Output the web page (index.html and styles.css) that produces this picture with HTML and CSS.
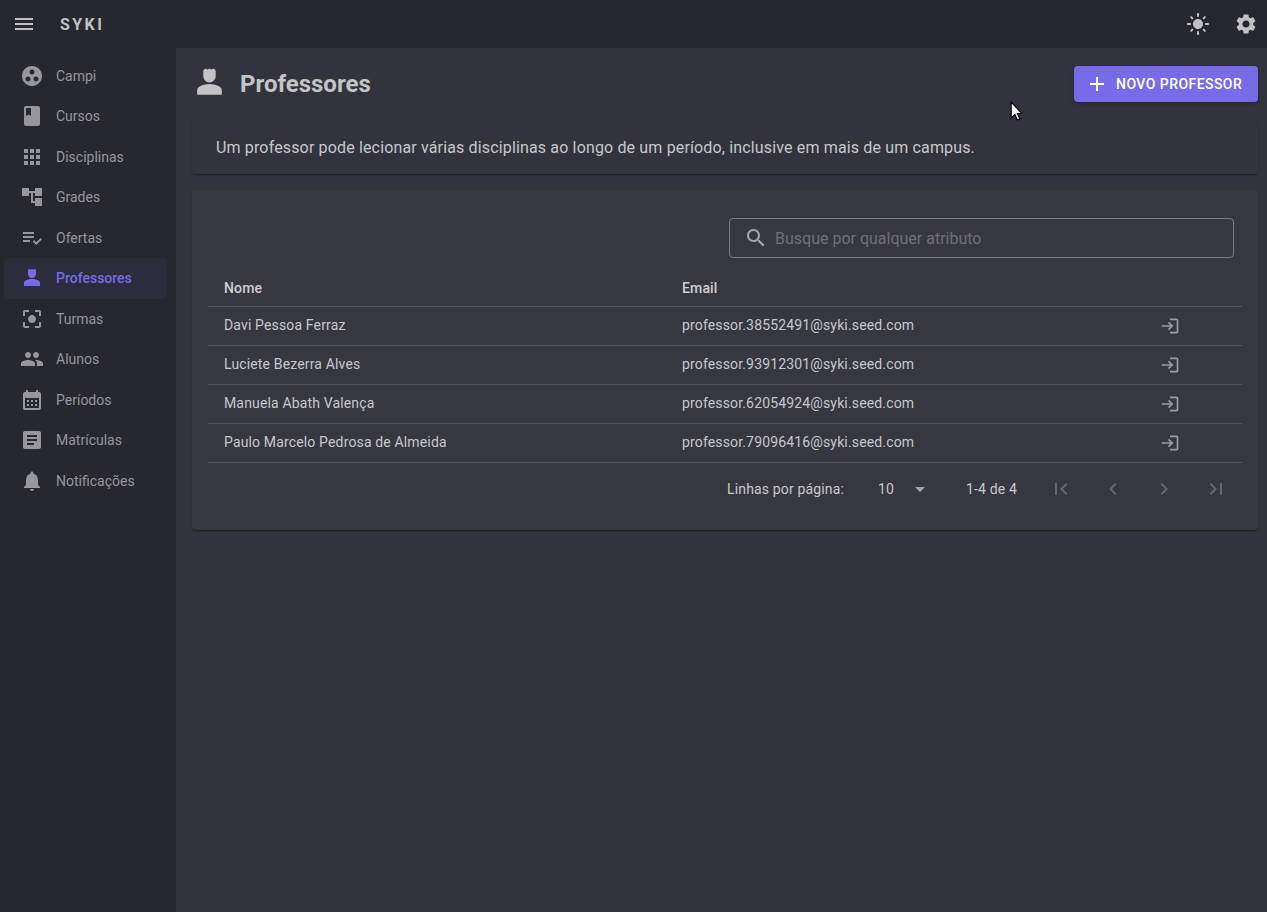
FILE: index.html
```html
<!DOCTYPE html>
<html lang="pt-BR">
<head>
    <meta charset="utf-8">
    <title>Syki - Professores</title>
    <link rel="stylesheet" href="styles.css">
</head>
<body>
    <header class="appbar">
        <svg class="icon menu-icon" viewBox="0 0 24 24"><path d="M3 18h18v-2H3v2zm0-5h18v-2H3v2zm0-7v2h18V6H3z"/></svg>
        <span class="logo">SYKI</span>
        <svg class="icon bar-icon sun-icon" viewBox="0 0 24 24"><path d="M12 7c-2.76 0-5 2.24-5 5s2.24 5 5 5 5-2.24 5-5-2.24-5-5-5zM2 13h2c.55 0 1-.45 1-1s-.45-1-1-1H2c-.55 0-1 .45-1 1s.45 1 1 1zm18 0h2c.55 0 1-.45 1-1s-.45-1-1-1h-2c-.55 0-1 .45-1 1s.45 1 1 1zM11 2v2c0 .55.45 1 1 1s1-.45 1-1V2c0-.55-.45-1-1-1s-1 .45-1 1zm0 18v2c0 .55.45 1 1 1s1-.45 1-1v-2c0-.55-.45-1-1-1s-1 .45-1 1zM5.99 4.58c-.39-.39-1.03-.39-1.41 0-.39.39-.39 1.03 0 1.41l1.06 1.06c.39.39 1.03.39 1.41 0s.39-1.03 0-1.41L5.99 4.58zm12.37 12.37c-.39-.39-1.03-.39-1.41 0-.39.39-.39 1.03 0 1.41l1.06 1.06c.39.39 1.03.39 1.41 0 .39-.39.39-1.03 0-1.41l-1.06-1.06zm1.06-10.96c.39-.39.39-1.03 0-1.41-.39-.39-1.03-.39-1.41 0l-1.06 1.06c-.39.39-.39 1.03 0 1.41s1.03.39 1.41 0l1.06-1.06zM7.05 18.36c.39-.39.39-1.03 0-1.41-.39-.39-1.03-.39-1.41 0l-1.06 1.06c-.39.39-.39 1.03 0 1.41s1.03.39 1.41 0l1.06-1.06z"/></svg>
        <svg class="icon bar-icon" viewBox="0 0 24 24"><path d="M19.14 12.94c.04-.3.06-.61.06-.94 0-.32-.02-.64-.07-.94l2.03-1.58c.18-.14.23-.41.12-.61l-1.92-3.32c-.12-.22-.37-.29-.59-.22l-2.39.96c-.5-.38-1.03-.7-1.62-.94l-.36-2.54c-.04-.24-.24-.41-.48-.41h-3.84c-.24 0-.43.17-.47.41l-.36 2.54c-.59.24-1.13.57-1.62.94l-2.39-.96c-.22-.08-.47 0-.59.22L2.74 8.87c-.12.21-.08.47.12.61l2.03 1.58c-.05.3-.09.63-.09.94s.02.64.07.94l-2.03 1.58c-.18.14-.23.41-.12.61l1.92 3.32c.12.22.37.29.59.22l2.39-.96c.5.38 1.03.7 1.62.94l.36 2.54c.05.24.24.41.48.41h3.84c.24 0 .44-.17.47-.41l.36-2.54c.59-.24 1.13-.56 1.62-.94l2.39.96c.22.08.47 0 .59-.22l1.92-3.32c.12-.22.07-.47-.12-.61l-2.01-1.58zM12 15.6c-1.98 0-3.6-1.62-3.6-3.6s1.62-3.6 3.6-3.6 3.6 1.62 3.6 3.6-1.62 3.6-3.6 3.6z"/></svg>
    </header>

    <div class="layout">
        <nav class="sidebar">
            <a class="nav-item"><svg class="icon" viewBox="0 0 24 24"><path d="M12 2C6.48 2 2 6.48 2 12s4.48 10 10 10 10-4.48 10-10S17.52 2 12 2zM8 17.5c-1.38 0-2.5-1.12-2.5-2.5s1.12-2.5 2.5-2.5 2.5 1.12 2.5 2.5-1.12 2.5-2.5 2.5zM9.5 8c0-1.38 1.12-2.5 2.5-2.5s2.5 1.12 2.5 2.5-1.12 2.5-2.5 2.5S9.5 9.38 9.5 8zm6.5 9.5c-1.38 0-2.5-1.12-2.5-2.5s1.12-2.5 2.5-2.5 2.5 1.12 2.5 2.5-1.12 2.5-2.5 2.5z"/></svg>Campi</a>
            <a class="nav-item"><svg class="icon" viewBox="0 0 24 24"><path d="M18 2H6c-1.1 0-2 .9-2 2v16c0 1.1.9 2 2 2h12c1.1 0 2-.9 2-2V4c0-1.1-.9-2-2-2zM6 4h5v8l-2.5-1.5L6 12V4z"/></svg>Cursos</a>
            <a class="nav-item"><svg class="icon" viewBox="0 0 24 24"><path d="M4 8h4V4H4v4zm6 12h4v-4h-4v4zm-6 0h4v-4H4v4zm0-6h4v-4H4v4zm6 0h4v-4h-4v4zm6-10v4h4V4h-4zm-6 4h4V4h-4v4zm6 6h4v-4h-4v4zm0 6h4v-4h-4v4z"/></svg>Disciplinas</a>
            <a class="nav-item"><svg class="icon" viewBox="0 0 24 24"><path d="M22 11V3h-7v3H9V3H2v8h7V8h2v10h4v3h7v-8h-7v3h-2V8h2v3z"/></svg>Grades</a>
            <a class="nav-item"><svg class="icon" viewBox="0 0 24 24"><path d="M3 10h11v2H3zm0-4h11v2H3zm0 8h7v2H3zm17.59-2.07-4.25 4.24-2.12-2.12-1.41 1.41L16.34 19 22 13.34z"/></svg>Ofertas</a>
            <a class="nav-item active"><svg class="icon" viewBox="0 0 24 24"><path d="M18.39 14.56C16.71 13.7 14.53 13 12 13s-4.71.7-6.39 1.56C4.61 15.07 4 16.1 4 17.22V20h16v-2.78c0-1.12-.61-2.15-1.61-2.66zM12 12c2.21 0 4-1.79 4-4V4.5C16 3.67 15.33 3 14.5 3c-.52 0-.98.27-1.25.67-.27-.4-.73-.67-1.25-.67s-.98.27-1.25.67C10.48 3.27 10.02 3 9.5 3 8.67 3 8 3.67 8 4.5V8c0 2.21 1.79 4 4 4z"/></svg>Professores</a>
            <a class="nav-item"><svg class="icon" viewBox="0 0 24 24"><path d="M12 8c-2.21 0-4 1.79-4 4s1.79 4 4 4 4-1.79 4-4-1.79-4-4-4zm-7 7H3v4c0 1.1.9 2 2 2h4v-2H5v-4zM5 5h4V3H5c-1.1 0-2 .9-2 2v4h2V5zm14-2h-4v2h4v4h2V5c0-1.1-.9-2-2-2zm0 16h-4v2h4c1.1 0 2-.9 2-2v-4h-2v4z"/></svg>Turmas</a>
            <a class="nav-item"><svg class="icon" viewBox="0 0 24 24"><path d="M16 11c1.66 0 2.99-1.34 2.99-3S17.66 5 16 5c-1.66 0-3 1.34-3 3s1.34 3 3 3zm-8 0c1.66 0 2.99-1.34 2.99-3S9.66 5 8 5C6.34 5 5 6.34 5 8s1.34 3 3 3zm0 2c-2.33 0-7 1.17-7 3.5V19h14v-2.5c0-2.33-4.67-3.5-7-3.5zm8 0c-.29 0-.62.02-.97.05 1.16.84 1.97 1.97 1.97 3.45V19h6v-2.5c0-2.33-4.67-3.5-7-3.5z"/></svg>Alunos</a>
            <a class="nav-item"><svg class="icon" viewBox="0 0 24 24"><path d="M19 4h-1V2h-2v2H8V2H6v2H5c-1.11 0-1.99.9-1.99 2L3 20c0 1.1.89 2 2 2h14c1.1 0 2-.9 2-2V6c0-1.1-.9-2-2-2zm0 16H5V10h14v10zM9 14H7v-2h2v2zm4 0h-2v-2h2v2zm4 0h-2v-2h2v2zm-8 4H7v-2h2v2zm4 0h-2v-2h2v2zm4 0h-2v-2h2v2z"/></svg>Períodos</a>
            <a class="nav-item"><svg class="icon" viewBox="0 0 24 24"><path d="M19 3H5c-1.1 0-2 .9-2 2v14c0 1.1.9 2 2 2h14c1.1 0 2-.9 2-2V5c0-1.1-.9-2-2-2zm-5 14H7v-2h7v2zm3-4H7v-2h10v2zm0-4H7V7h10v2z"/></svg>Matrículas</a>
            <a class="nav-item"><svg class="icon" viewBox="0 0 24 24"><path d="M12 22c1.1 0 2-.9 2-2h-4c0 1.1.9 2 2 2zm6-6v-5c0-3.07-1.63-5.64-4.5-6.32V4c0-.83-.67-1.5-1.5-1.5s-1.5.67-1.5 1.5v.68C7.64 5.36 6 7.92 6 11v5l-2 2v1h16v-1l-2-2z"/></svg>Notificações</a>
        </nav>

        <main class="content">
            <div class="page-header">
                <svg class="icon title-icon" viewBox="0 0 24 24"><path d="M18.39 14.56C16.71 13.7 14.53 13 12 13s-4.71.7-6.39 1.56C4.61 15.07 4 16.1 4 17.22V20h16v-2.78c0-1.12-.61-2.15-1.61-2.66zM12 12c2.21 0 4-1.79 4-4V4.5C16 3.67 15.33 3 14.5 3c-.52 0-.98.27-1.25.67-.27-.4-.73-.67-1.25-.67s-.98.27-1.25.67C10.48 3.27 10.02 3 9.5 3 8.67 3 8 3.67 8 4.5V8c0 2.21 1.79 4 4 4z"/></svg>
                <h1>Professores</h1>
                <button class="btn-primary" type="button">
                    <svg class="icon" viewBox="0 0 24 24"><path d="M19 13h-6v6h-2v-6H5v-2h6V5h2v6h6v2z"/></svg>
                    Novo Professor
                </button>
            </div>

            <div class="card info-card">Um professor pode lecionar várias disciplinas ao longo de um período, inclusive em mais de um campus.</div>

            <div class="card table-card">
                <div class="search-row">
                    <div class="search-box">
                        <svg class="icon" viewBox="0 0 24 24"><path d="M15.5 14h-.79l-.28-.27C15.41 12.59 16 11.11 16 9.5 16 5.91 13.09 3 9.5 3S3 5.91 3 9.5 5.91 16 9.5 16c1.61 0 3.09-.59 4.23-1.57l.27.28v.79l5 4.99L20.49 19l-4.99-5zm-6 0C7.01 14 5 11.99 5 9.5S7.01 5 9.5 5 14 7.01 14 9.5 11.99 14 9.5 14z"/></svg>
                        <span>Busque por qualquer atributo</span>
                    </div>
                </div>

                <table class="data-table">
                    <thead>
                        <tr>
                            <th class="col-name">Nome</th>
                            <th class="col-email">Email</th>
                            <th></th>
                        </tr>
                    </thead>
                    <tbody>
                        <tr>
                            <td>Davi Pessoa Ferraz</td>
                            <td>professor.38552491@syki.seed.com</td>
                            <td class="col-action"><svg class="icon" viewBox="0 0 24 24"><path d="M11 7L9.6 8.4l2.6 2.6H2v2h10.2l-2.6 2.6L11 17l5-5-5-5zm9 12h-8v2h8c1.1 0 2-.9 2-2V5c0-1.1-.9-2-2-2h-8v2h8v14z"/></svg></td>
                        </tr>
                        <tr>
                            <td>Luciete Bezerra Alves</td>
                            <td>professor.93912301@syki.seed.com</td>
                            <td class="col-action"><svg class="icon" viewBox="0 0 24 24"><path d="M11 7L9.6 8.4l2.6 2.6H2v2h10.2l-2.6 2.6L11 17l5-5-5-5zm9 12h-8v2h8c1.1 0 2-.9 2-2V5c0-1.1-.9-2-2-2h-8v2h8v14z"/></svg></td>
                        </tr>
                        <tr>
                            <td>Manuela Abath Valença</td>
                            <td>professor.62054924@syki.seed.com</td>
                            <td class="col-action"><svg class="icon" viewBox="0 0 24 24"><path d="M11 7L9.6 8.4l2.6 2.6H2v2h10.2l-2.6 2.6L11 17l5-5-5-5zm9 12h-8v2h8c1.1 0 2-.9 2-2V5c0-1.1-.9-2-2-2h-8v2h8v14z"/></svg></td>
                        </tr>
                        <tr>
                            <td>Paulo Marcelo Pedrosa de Almeida</td>
                            <td>professor.79096416@syki.seed.com</td>
                            <td class="col-action"><svg class="icon" viewBox="0 0 24 24"><path d="M11 7L9.6 8.4l2.6 2.6H2v2h10.2l-2.6 2.6L11 17l5-5-5-5zm9 12h-8v2h8c1.1 0 2-.9 2-2V5c0-1.1-.9-2-2-2h-8v2h8v14z"/></svg></td>
                        </tr>
                    </tbody>
                </table>

                <div class="pagination">
                    <span>Linhas por página:</span>
                    <span class="page-size">10</span>
                    <svg class="icon caret" viewBox="0 0 24 24"><path d="M7 10l5 5 5-5z"/></svg>
                    <span class="page-range">1-4 de 4</span>
                    <svg class="icon page-btn" viewBox="0 0 24 24"><path d="M18.41 16.59L13.82 12l4.59-4.59L17 6l-6 6 6 6zM6 6h2v12H6z"/></svg>
                    <svg class="icon page-btn" viewBox="0 0 24 24"><path d="M15.41 16.59L10.83 12l4.58-4.59L14 6l-6 6 6 6 1.41-1.41z"/></svg>
                    <svg class="icon page-btn" viewBox="0 0 24 24"><path d="M8.59 16.59L13.17 12 8.59 7.41 10 6l6 6-6 6-1.41-1.41z"/></svg>
                    <svg class="icon page-btn" viewBox="0 0 24 24"><path d="M5.59 7.41L10.18 12l-4.59 4.59L7 18l6-6-6-6zM16 6h2v12h-2z"/></svg>
                </div>
            </div>
        </main>
    </div>

    <svg class="cursor" width="13" height="20" viewBox="0 0 12 19"><path d="M1 1v15l3.5-3.3 2.4 5.3 2.2-1-2.4-5.1H11z" fill="#fff" stroke="#000" stroke-width="1"/></svg>
</body>
</html>
```

FILE: styles.css
```css
* {
    box-sizing: border-box;
}
body {
    margin: 0;
    height: 912px;
    overflow: hidden;
    font-family: Roboto, "Liberation Sans", sans-serif;
    font-size: 14px;
    background-color: #32333d;
    color: #c8c8cb;
}
.icon {
    width: 24px;
    height: 24px;
    flex-shrink: 0;
    fill: currentColor;
    display: block;
}

/* barra superior */
.appbar {
    height: 48px;
    background-color: #27272f;
    color: #c2c2c4;
    display: flex;
    align-items: center;
    padding: 0 9px 0 12px;
}
.logo {
    margin-left: 24px;
    font-size: 16px;
    font-weight: 700;
    letter-spacing: 2.4px;
}
.bar-icon {
    margin-left: 24px;
}
.sun-icon {
    margin-left: auto;
}

/* menu lateral */
.layout {
    display: flex;
    height: 864px;
}
.sidebar {
    width: 176px;
    flex-shrink: 0;
    background-color: #27272f;
    padding-top: 7.72px;
}
.nav-item {
    display: flex;
    align-items: center;
    gap: 12px;
    height: 40.5px;
    width: 163px;
    margin-left: 4px;
    padding-left: 16px;
    border-radius: 4px;
    color: #96969b;
}
.nav-item.active {
    background-color: #2d2c3c;
    color: #776be7;
    font-weight: 500;
}

/* conteudo */
.content {
    flex: 1;
    padding: 18px 9px 0 16px;
}
.page-header {
    display: flex;
    align-items: center;
    height: 36px;
    margin-bottom: 18px;
    color: #c4c4c6;
}
.title-icon {
    width: 37px;
    height: 37px;
    margin: -4px 0 0 -1px;
}
h1 {
    margin: 0 0 0 12px;
    font-size: 24px;
    font-weight: 700;
}
.btn-primary {
    margin-left: auto;
    width: 184px;
    height: 36px;
    display: flex;
    align-items: center;
    gap: 7px;
    padding: 0 0 0 11px;
    background-color: #776be7;
    color: #fff;
    border: none;
    border-radius: 4px;
    font-family: inherit;
    font-size: 14px;
    font-weight: 500;
    letter-spacing: 0.45px;
    text-transform: uppercase;
    box-shadow: 0 2px 4px rgba(0, 0, 0, 0.25);
}
.card {
    background-color: #373740;
    border-radius: 4px;
    box-shadow: 0 2px 1px -1px rgba(0, 0, 0, 0.2), 0 1px 1px rgba(0, 0, 0, 0.14), 0 1px 3px rgba(0, 0, 0, 0.12);
}
.info-card {
    height: 54px;
    margin-bottom: 16px;
    padding: 0 24px;
    display: flex;
    align-items: center;
    font-size: 16px;
    letter-spacing: 0.15px;
    background-color: #32333d;
}
.table-card {
    height: 340px;
    padding: 28px 16px 0;
    letter-spacing: 0.15px;
}
.search-row {
    display: flex;
    justify-content: flex-end;
    padding-right: 8px;
}
.search-box {
    width: 505px;
    height: 40px;
    display: flex;
    align-items: center;
    gap: 7px;
    padding-left: 14px;
    border: 1px solid #7c7c83;
    border-radius: 4px;
    font-size: 16px;
    letter-spacing: 0;
    color: #6f6f76;
}
.search-box .icon {
    color: #a6a6aa;
}

/* tabela */
.data-table {
    width: 1034px;
    margin-top: 12px;
    border-collapse: collapse;
    table-layout: fixed;
}
th, td {
    border-bottom: 1px solid #515158;
    padding: 0 16px;
    text-align: left;
}
th {
    height: 36px;
    font-weight: 500;
    color: #cfcfd2;
}
td {
    height: 39px;
    padding-bottom: 2px;
}
.col-name {
    width: 458px;
}
.col-email {
    width: 458px;
}
td.col-action {
    color: #9b9ba0;
    padding: 0 0 0 36px;
}
.col-action .icon {
    width: 20px;
    height: 20px;
}

/* paginacao */
.pagination {
    display: flex;
    align-items: center;
    height: 52px;
    padding-left: 519px;
    white-space: nowrap;
}
.page-size {
    margin-left: 34px;
}
.caret {
    margin-left: 14px;
    color: #a6a6aa;
}
.page-range {
    margin-left: 34px;
    margin-right: 32px;
}
.page-btn {
    margin-right: 27.6px;
    color: #66666d;
}
.page-btn:last-child {
    margin-right: 0;
}
.cursor {
    position: absolute;
    left: 1010px;
    top: 101px;
}
```
